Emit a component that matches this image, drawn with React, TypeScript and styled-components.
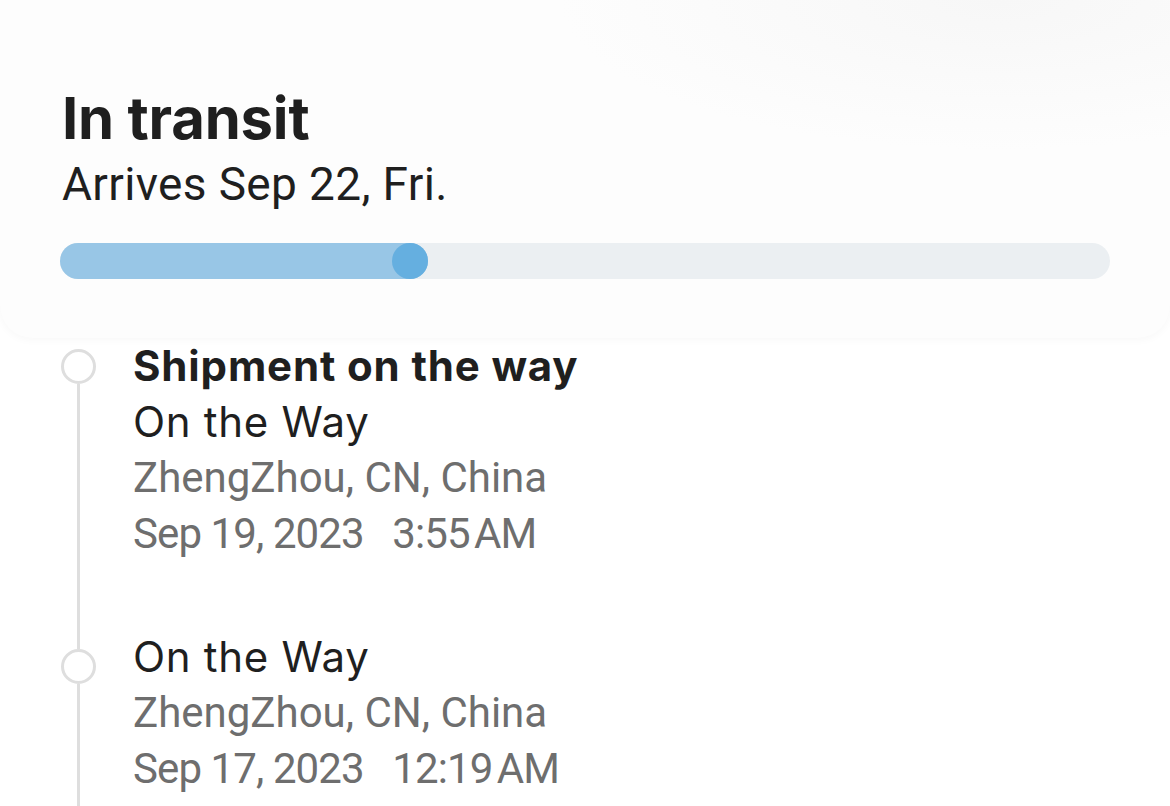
import * as React from 'react';
import styled, { createGlobalStyle } from 'styled-components';

const GlobalStyle = createGlobalStyle`
  html, body {
    margin: 0;
    padding: 0;
    background: #ffffff;
  }
  body {
    font-family: Inter, "Noto Sans", "Liberation Sans", sans-serif;
    color: #1f1f1f;
    -webkit-font-smoothing: antialiased;
  }
`;

const Page = styled.div`
  width: 1170px;
  height: 806px;
  overflow: hidden;
  background: #ffffff;
`;

const Card = styled.section`
  padding: 83px 60px 59px 60px;
  border-radius: 0 0 32px 32px;
  background:
    radial-gradient(ellipse 440px 150px at 1000px 0px, #f7f7f7 0%, #fafafa 50%, rgba(253, 253, 253, 0) 100%),
    #fdfdfd;
  box-shadow: 0 2px 8px rgba(0, 0, 0, 0.03);
`;

const Title = styled.h1`
  margin: 0 0 3px 2px;
  font-size: 58px;
  line-height: 70px;
  font-weight: 700;
  letter-spacing: -0.2px;
`;

const Subtitle = styled.p`
  margin: 0 0 31px 2px;
  font-family: Roboto, Inter, sans-serif;
  font-size: 46px;
  line-height: 56px;
  font-weight: 400;
  letter-spacing: 0.35px;
`;

const Track = styled.div`
  height: 36px;
  border-radius: 18px;
  background: #ebeff2;
  display: flex;
`;

const Fill = styled.div`
  height: 36px;
  border-radius: 18px;
  background: #98c6e6;
  display: flex;
  justify-content: flex-end;
`;

const Knob = styled.div`
  width: 36px;
  height: 36px;
  border-radius: 50%;
  background: #65afe0;
`;

const Timeline = styled.ol`
  list-style: none;
  margin: 0;
  padding: 0 0 0 60px;
`;

const Item = styled.li`
  display: flex;
  gap: 37px;
`;

const Rail = styled.div`
  width: 36px;
  display: flex;
  flex-direction: column;
  align-items: center;
  flex-shrink: 0;
`;

const Segment = styled.div<{ $visible?: boolean; $height?: number }>`
  width: 3px;
  background: ${(p) => (p.$visible === false ? 'transparent' : '#dedede')};
  ${(p) => (p.$height !== undefined ? `height: ${p.$height}px;` : 'flex: 1;')}
`;

const Dot = styled.div`
  width: 35px;
  height: 35px;
  box-sizing: border-box;
  border-radius: 50%;
  border: 3px solid #dedede;
  background: #ffffff;
  flex-shrink: 0;
`;

const Body = styled.div<{ $pad: number }>`
  display: flex;
  flex-direction: column;
  padding-bottom: ${(p) => p.$pad}px;
`;

const Line = styled.div<{ $tone: 'strong' | 'main' }>`
  font-size: 42px;
  line-height: 56px;
  white-space: pre;
  color: #1f1f1f;
  font-weight: ${(p) => (p.$tone === 'strong' ? 700 : 400)};
  letter-spacing: ${(p) => (p.$tone === 'strong' ? '0.85px' : '0.7px')};
`;

const Meta = styled.div<{ $tight?: boolean }>`
  font-family: Roboto, Inter, sans-serif;
  font-size: 42px;
  line-height: 56px;
  white-space: pre;
  color: #6e6e6e;
  letter-spacing: ${(p) => (p.$tight ? '-0.9px' : '0px')};
`;

interface TrackEvent {
  heading?: string;
  status: string;
  place: string;
  date: string;
  time: string;
}

const events: TrackEvent[] = [
  {
    heading: 'Shipment on the way',
    status: 'On the Way',
    place: 'ZhengZhou, CN, China',
    date: 'Sep 19, 2023',
    time: '3:55\u202FAM',
  },
  {
    status: 'On the Way',
    place: 'ZhengZhou, CN, China',
    date: 'Sep 17, 2023',
    time: '12:19\u202FAM',
  },
];

export default function App() {
  const progress = 368;

  return (
    <Page>
      <GlobalStyle />
      <Card>
        <Title>In transit</Title>
        <Subtitle>Arrives Sep 22, Fri.</Subtitle>
        <Track>
          <Fill style={{ width: progress }}>
            <Knob />
          </Fill>
        </Track>
      </Card>
      <Timeline>
        {events.map((ev, i) => (
          <Item key={i}>
            <Rail>
              <Segment $visible={i > 0} $height={ev.heading ? 11 : 20} />
              <Dot />
              <Segment />
            </Rail>
            <Body $pad={67}>
              {ev.heading && <Line $tone="strong">{ev.heading}</Line>}
              <Line $tone="main">{ev.status}</Line>
              <Meta>{ev.place}</Meta>
              <Meta $tight>{`${ev.date}   ${ev.time}`}</Meta>
            </Body>
          </Item>
        ))}
      </Timeline>
    </Page>
  );
}
